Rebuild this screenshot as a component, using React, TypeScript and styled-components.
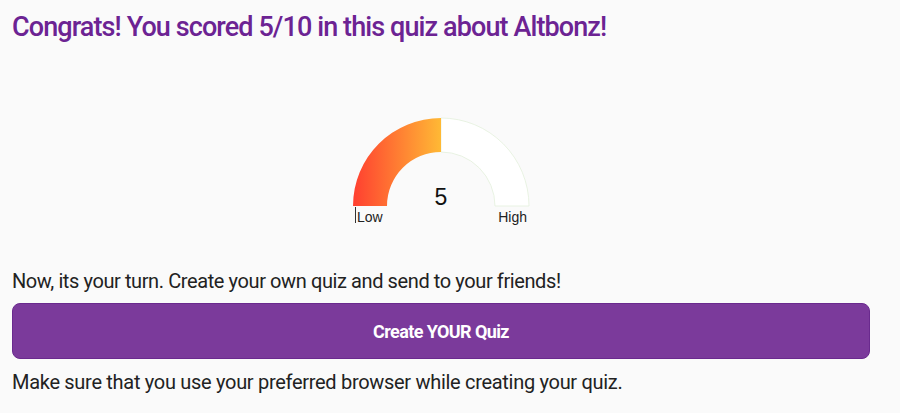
import React from "react";
import styled, { createGlobalStyle } from "styled-components";

const Global = createGlobalStyle`
  html, body { margin: 0; padding: 0; background: #fafafa; }
  body { font-family: Roboto, "Liberation Sans", sans-serif; }
`;

const Page = styled.div`
  width: 858px;
  padding: 0 30px 0 12px;
  display: flex;
  flex-direction: column;
`;

const Title = styled.h1`
  margin: 10px 0 0 0;
  font-size: 27px;
  line-height: 34px;
  font-weight: 500;
  color: #6c2393;
  letter-spacing: -0.9px;
`;

const GaugeWrap = styled.div`
  display: flex;
  justify-content: center;
  margin-top: 72px;
  height: 112px;
`;

const Text = styled.p<{ $tight?: boolean }>`
  margin: 0;
  font-size: 20px;
  line-height: 26px;
  color: #222;
  letter-spacing: ${(p) => (p.$tight ? "-0.4px" : "-0.3px")};
`;

const Turn = styled(Text)`
  margin-top: 40px;
`;

const Note = styled(Text)`
  margin-top: 10px;
`;

const Button = styled.button`
  margin-top: 9px;
  height: 56px;
  width: 858px;
  border: 1px solid #6a2a8e;
  border-radius: 8px;
  background: #7b3a9b;
  color: #fff;
  font-family: inherit;
  font-size: 18px;
  font-weight: 700;
  letter-spacing: -0.6px;
  cursor: pointer;
`;

const Gauge: React.FC<{ value: number; max: number }> = ({ value, max }) => {
  const cx = 90, cy = 90, R = 88, r = 54;
  const frac = value / max;
  const a = Math.PI * (1 - frac);
  const ox = cx + R * Math.cos(a), oy = cy - R * Math.sin(a);
  const ix = cx + r * Math.cos(a), iy = cy - r * Math.sin(a);
  const filled = `M ${cx - R} ${cy} A ${R} ${R} 0 0 1 ${ox} ${oy} L ${ix} ${iy} A ${r} ${r} 0 0 0 ${cx - r} ${cy} Z`;
  const rest = `M ${ox} ${oy} A ${R} ${R} 0 0 1 ${cx + R} ${cy} L ${cx + r} ${cy} A ${r} ${r} 0 0 0 ${ix} ${iy} Z`;
  return (
    <svg width="180" height="112" viewBox="0 0 180 112">
      <defs>
        <linearGradient id="gg" x1="0" y1="0" x2="1" y2="0">
          <stop offset="0" stopColor="#ff3f30" />
          <stop offset="1" stopColor="#ffb935" />
        </linearGradient>
      </defs>
      <path d={rest} fill="#ffffff" stroke="#e3f0dc" strokeWidth="0.8" />
      <path d={filled} fill="url(#gg)" />
      <text x="90" y="89" textAnchor="middle" fontFamily="Liberation Sans, Arial, sans-serif" fontSize="23" fill="#111">
        {value}
      </text>
      <line x1="4.5" y1="91" x2="4.5" y2="107" stroke="#333" strokeWidth="1" />
      <text x="6" y="106" fontFamily="Liberation Sans, Arial, sans-serif" fontSize="14" fill="#222">Low</text>
      <text x="176" y="106" textAnchor="end" fontFamily="Liberation Sans, Arial, sans-serif" fontSize="14" fill="#222">High</text>
    </svg>
  );
};

export default function App() {
  return (
    <>
      <Global />
      <Page>
        <Title>Congrats! You scored 5/10 in this quiz about Altbonz!</Title>
        <GaugeWrap>
          <Gauge value={5} max={10} />
        </GaugeWrap>
        <Turn $tight>Now, its your turn. Create your own quiz and send to your friends!</Turn>
        <Button>Create YOUR Quiz</Button>
        <Note>Make sure that you use your preferred browser while creating your quiz.</Note>
      </Page>
    </>
  );
}
